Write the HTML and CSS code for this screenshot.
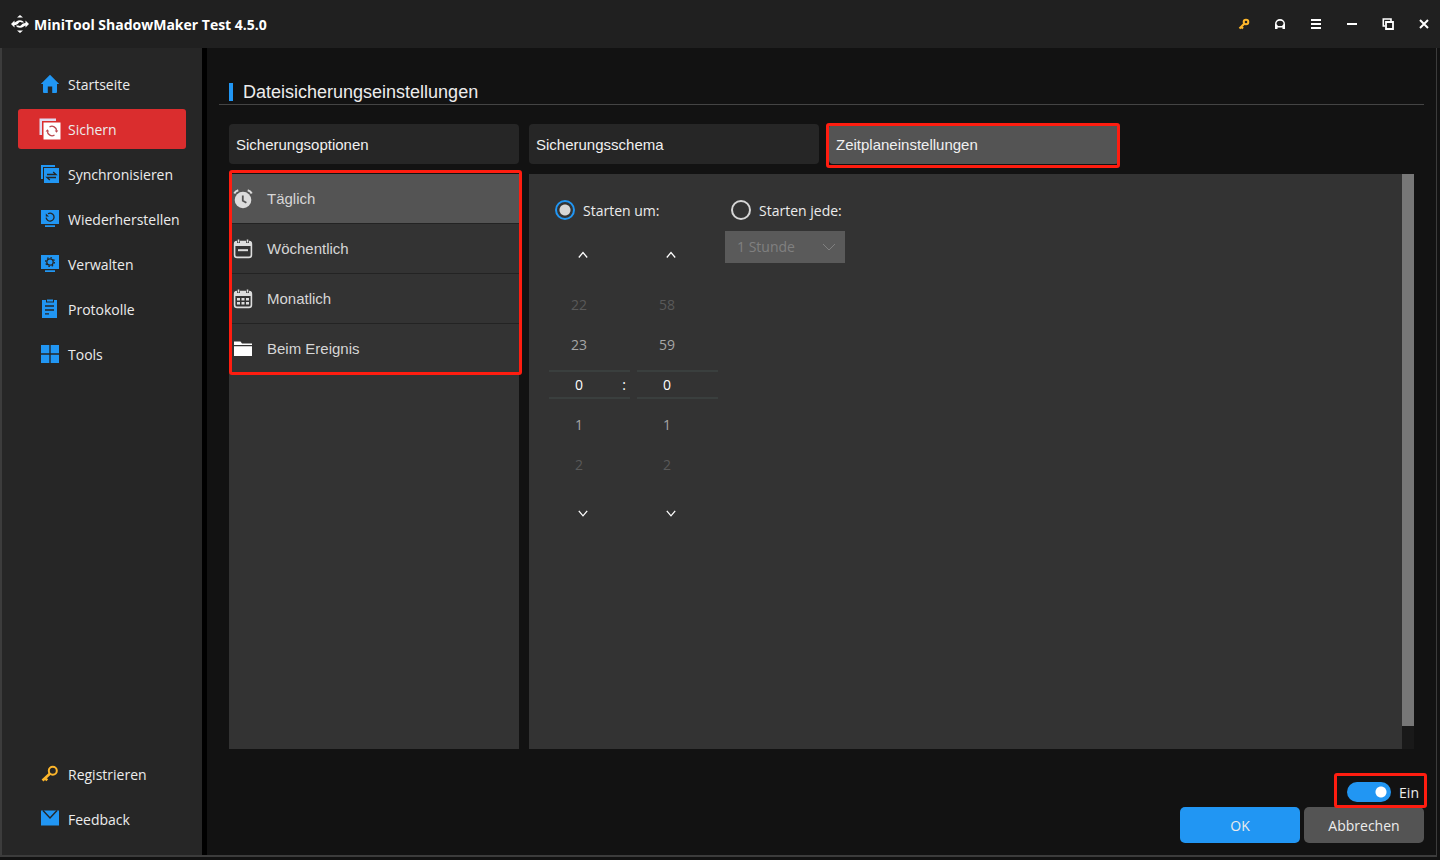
FILE: index.html
```html
<!DOCTYPE html>
<html lang="de">
<head>
<meta charset="utf-8">
<title>MiniTool ShadowMaker</title>
<link rel="stylesheet" href="styles.css">
</head>
<body>
<div class="window">
  <header class="titlebar">
    <svg class="logo" viewBox="0 0 18 18" aria-hidden="true">
      <path d="M6 2.600 9 0l3 2.600ZM6 15.400 9 18l3-2.600Z" fill="#fff"/>
      <path d="M0 9 3.500 5.500v2c1.500-.2 2.500-2.300 5.500-2.300 2 0 3.500 1 4 2.300H10.500C9 6.700 8.200 7.200 7.400 8.200c-.8 1-2 1.800-3.900 1.800v2.500ZM18 9l-3.500 3.500v-2c-1.500.2-2.500 2.300-5.500 2.300-2 0-3.500-1-4-2.300h2.500c1.500.8 2.300.3 3.100-.7.800-1 2-1.800 3.900-1.800V5.500Z" fill="#fff"/>
    </svg>
    <h1 class="app-title">MiniTool ShadowMaker Test 4.5.0</h1>
    <div class="window-controls">
      <button type="button" class="control" aria-label="Registrieren">
        <svg viewBox="0 0 12 12"><circle cx="8" cy="4" r="2.300" fill="none" stroke="#fdb62b" stroke-width="2"/><path d="M6.500 5.500 1.500 10.500M3 8.500l2 2" fill="none" stroke="#fdb62b" stroke-width="2.200"/></svg>
      </button>
      <button type="button" class="control" aria-label="Support">
        <svg viewBox="0 0 12 12"><path d="M1 11V6a5 5 0 0 1 10 0v5H8.500V9.500h-5V11Z" fill="#fff"/><path d="M2.500 6a3.500 3.300 0 0 1 7 0L8 8H4Z" fill="#202020"/></svg>
      </button>
      <button type="button" class="control" aria-label="Menü">
        <svg viewBox="0 0 12 12"><path d="M1 2h10M1 6h10M1 10h10" stroke="#fff" stroke-width="2"/></svg>
      </button>
      <button type="button" class="control" aria-label="Minimieren">
        <svg viewBox="0 0 12 12"><path d="M1 6h10" stroke="#fff" stroke-width="2"/></svg>
      </button>
      <button type="button" class="control" aria-label="Maximieren">
        <svg viewBox="0 0 12 12"><path d="M3 8H1.300V1H9v2" fill="none" stroke="#fff" stroke-width="1.600"/><path d="M4 4h7v7H4Z" fill="#202020" stroke="#fff" stroke-width="1.800"/></svg>
      </button>
      <button type="button" class="control" aria-label="Schließen">
        <svg viewBox="0 0 12 12"><path d="m2 2 8 8M10 2l-8 8" stroke="#fff" stroke-width="2"/></svg>
      </button>
    </div>
  </header>

  <div class="body">
    <nav class="sidebar">
      <a class="nav-item" href="#start">
        <svg class="nav-icon" viewBox="0 0 20 20"><path d="M10 .800 19.200 10H17v8q0 1-1 1h-3.800v-6.500H7.800V19H4q-1 0-1-1V10H.800Z" fill="#2196f3"/></svg>
        <span class="caption">Startseite</span></a>
      <a class="nav-item nav-item-active" href="#backup" aria-current="page">
        <svg class="nav-icon nav-icon-large" viewBox="0 0 22 22"><path d="M.500 17V.500H17V3H3V17Z" fill="#dfdcf0"/><path d="M4.500 4.500H21.500V21.500H4.500Z" fill="#fff"/><path d="M10.500 9a4.600 4.600 0 0 1 7.100 3.800M15.500 17a4.600 4.600 0 0 1-7.100-3.800" fill="none" stroke="#b9474e" stroke-width="1.300"/><path d="m15.700 12.500h3.600l-1.800 2.300ZM6.600 13.500h3.600l-1.800-2.300Z" fill="#b9474e"/></svg>
        <span class="caption">Sichern</span></a>
      <a class="nav-item" href="#sync">
        <svg class="nav-icon" viewBox="0 0 20 20"><path d="M1 15V1h14v2H3V15Z" fill="#2196f3"/><path d="M4 4h15v15H4Z" fill="#2196f3"/><path d="M7 10.500h9L13.200 8M16 13.500H7l2.800 2.500" fill="none" stroke="#262626" stroke-width="1.300"/></svg>
        <span class="caption">Synchronisieren</span></a>
      <a class="nav-item" href="#restore">
        <svg class="nav-icon" viewBox="0 0 20 20"><path d="M1 1h18v14H1ZM5 16.200h10v1.800H5Z" fill="#2196f3"/><path d="M8 4.700a4 4 0 1 1-1.900 4" fill="none" stroke="#262626" stroke-width="1.300"/><path d="M5.800 7.500V4.500L9 7.500Z" fill="#262626"/></svg>
        <span class="caption">Wiederherstellen</span></a>
      <a class="nav-item" href="#manage">
        <svg class="nav-icon" viewBox="0 0 20 20"><path d="M1 1h18v14H1ZM5 16.200h10v1.800H5Z" fill="#2196f3"/><circle cx="10" cy="8" r="3.200" fill="none" stroke="#262626" stroke-width="1.300"/><circle cx="10" cy="8" r="4.400" fill="none" stroke="#262626" stroke-width="1.300" stroke-dasharray="1.500 1.950"/></svg>
        <span class="caption">Verwalten</span></a>
      <a class="nav-item" href="#logs">
        <svg class="nav-icon" viewBox="0 0 20 20"><path d="M2 1h4v2.500h8V1h3v18H2Z" fill="#2196f3"/><path d="M7 .5h6v2H7Z" fill="#2196f3"/><path d="M5 7h9M5 11h9M5 14.800h4" stroke="#262626" stroke-width="1.300"/></svg>
        <span class="caption">Protokolle</span></a>
      <a class="nav-item" href="#tools">
        <svg class="nav-icon" viewBox="0 0 20 20"><path d="M1 1h8.300v8.300H1ZM10.700 1H19v8.300h-8.300ZM1 10.700h8.300V19H1ZM10.700 10.700H19V19h-8.300Z" fill="#2196f3"/></svg>
        <span class="caption">Tools</span></a>
      <div class="nav-spacer"></div>
      <a class="nav-item" href="#register">
        <svg class="nav-icon" viewBox="0 0 20 20"><circle cx="12.800" cy="6.800" r="4" fill="none" stroke="#fdb62b" stroke-width="2"/><path d="m9.800 9.800-7.300 6.700M4.500 14l2.800 2.300" fill="none" stroke="#fdb62b" stroke-width="2.600"/></svg>
        <span class="caption">Registrieren</span></a>
      <a class="nav-item" href="#feedback">
        <svg class="nav-icon" viewBox="0 0 20 20"><path d="M1 1.500h18V16.500H1Z" fill="#2196f3"/><path d="m3 1.500 7 7.500 7-7.500" fill="none" stroke="#262626" stroke-width="1.400"/></svg>
        <span class="caption">Feedback</span></a>
    </nav>

    <main class="main">
      <h2 class="page-title">Dateisicherungseinstellungen</h2>

      <div class="content">
        <div class="tabs">
          <button type="button" class="tab">Sicherungsoptionen</button>
          <button type="button" class="tab">Sicherungsschema</button>
          <button type="button" class="tab tab-active">Zeitplaneinstellungen<span class="highlight highlight-tab"></span></button>
        </div>

        <div class="panels">
          <div class="modes">
            <button type="button" class="mode mode-active">
              <svg class="mode-icon" viewBox="0 0 20 20"><circle cx="10" cy="11" r="8.300" fill="#dcdcdc"/><path d="M1.300 4.500q1-2.400 4-3.300M18.700 4.500q-1-2.400-4-3.300" fill="none" stroke="#dcdcdc" stroke-width="2"/><path d="M9.800 6.500v5.300l3.600 2" fill="none" stroke="#545454" stroke-width="1.800"/></svg>
              Täglich</button>
            <button type="button" class="mode">
              <svg class="mode-icon" viewBox="0 0 20 20"><rect x="1.600" y="2.600" width="16.800" height="15.800" rx="2.500" fill="none" stroke="#dcdcdc" stroke-width="1.600"/><path d="M2 2.500h16V7H2Z" fill="#dcdcdc"/><path d="M5.500 0v4M14.500 0v4" stroke="#333" stroke-width="3"/><path d="M5.500 .5v3M14.500 .5v3" stroke="#dcdcdc" stroke-width="1.600"/><path d="M5 11.200h10" stroke="#dcdcdc" stroke-width="2"/></svg>
              Wöchentlich</button>
            <button type="button" class="mode">
              <svg class="mode-icon" viewBox="0 0 20 20"><rect x="1.600" y="2.600" width="16.800" height="15.800" rx="2.500" fill="none" stroke="#dcdcdc" stroke-width="1.600"/><path d="M2 2.500h16V7H2Z" fill="#dcdcdc"/><path d="M5.500 0v4M14.500 0v4" stroke="#333" stroke-width="3"/><path d="M5.500 .5v3M14.500 .5v3" stroke="#dcdcdc" stroke-width="1.600"/><path d="M4 10.300h12M4 14.200h12" stroke="#dcdcdc" stroke-width="2.400" stroke-dasharray="3 1.500"/></svg>
              Monatlich</button>
            <button type="button" class="mode">
              <svg class="mode-icon" viewBox="0 0 20 20"><path d="M1 2.500h6.500l1.500 2H19V6H1ZM1 7.200h18V17H1Z" fill="#fff"/></svg>
              Beim Ereignis</button>
            <span class="highlight highlight-modes"></span>
          </div>

          <div class="schedule">
            <section class="start-at">
              <label class="radio"><input type="radio" name="start" checked><span class="caption">Starten um:</span></label>
              <div class="wheels">
                <div class="wheel">
                  <button type="button" class="step" aria-label="Stunde zurück"><svg viewBox="0 0 12 12"><path d="m1.800 8.500 4.200-5 4.200 5" fill="none" stroke="#fff" stroke-width="1.300"/></svg></button>
                  <ul class="values">
                    <li class="far">22</li><li class="near">23</li><li class="current">0<span class="colon">:</span></li><li class="near">1</li><li class="far">2</li>
                  </ul>
                  <button type="button" class="step" aria-label="Stunde vor"><svg viewBox="0 0 12 12"><path d="m1.800 3.800 4.200 5 4.200-5" fill="none" stroke="#fff" stroke-width="1.300"/></svg></button>
                </div>
                <div class="wheel">
                  <button type="button" class="step" aria-label="Minute zurück"><svg viewBox="0 0 12 12"><path d="m1.800 8.500 4.200-5 4.200 5" fill="none" stroke="#fff" stroke-width="1.300"/></svg></button>
                  <ul class="values">
                    <li class="far">58</li><li class="near">59</li><li class="current">0</li><li class="near">1</li><li class="far">2</li>
                  </ul>
                  <button type="button" class="step" aria-label="Minute vor"><svg viewBox="0 0 12 12"><path d="m1.800 3.800 4.200 5 4.200-5" fill="none" stroke="#fff" stroke-width="1.300"/></svg></button>
                </div>
              </div>
            </section>
            <section class="start-every">
              <label class="radio"><input type="radio" name="start"><span class="caption">Starten jede:</span></label>
              <div class="interval">
                <select class="interval-select" aria-label="Intervall" disabled><option>1 Stunde</option></select>
                <svg class="interval-arrow" viewBox="0 0 14 8"><path d="m1 1 6 6 6-6" fill="none" stroke="#808080"/></svg>
              </div>
            </section>
          </div>
          <div class="scrollbar"><div class="scroll-thumb"></div></div>
        </div>
      </div>

      <footer class="footer">
        <label class="toggle"><input type="checkbox" role="switch" checked><span class="caption">Ein</span><span class="highlight highlight-toggle"></span></label>
        <div class="actions">
          <button type="button" class="button button-primary">OK</button>
          <button type="button" class="button">Abbrechen</button>
        </div>
      </footer>
    </main>
  </div>
</div>
</body>
</html>
```
FILE: styles.css
```css
* { box-sizing: border-box; }

body {
  margin: 0;
  background: #121212;
  color: #ececec;
  font: 14px/20px "Open Sans", "Noto Sans", sans-serif;
}

button, select, input { font: inherit; color: inherit; margin: 0; }
button { border: 0; padding: 0; background: none; }
svg { display: block; flex: none; }

.window {
  display: flex;
  flex-direction: column;
  height: 100vh;
  padding-bottom: 3px;
}

.caption { padding-top: 2px; }

/* Title bar */
.titlebar {
  display: flex;
  align-items: center;
  gap: 5px;
  height: 48px;
  flex: none;
  padding: 0 4px 0 11px;
  background: #202020;
}
.logo { width: 18px; height: 18px; }
.app-title {
  margin: 0;
  padding-top: 2px;
  color: #fff;
  font-size: 14px;
  font-weight: 700;
}
.window-controls { display: flex; gap: 12px; margin-left: auto; }
.control {
  display: grid;
  place-items: center;
  width: 24px;
  height: 24px;
}
.control svg { width: 12px; height: 12px; }

/* Frame */
.body {
  display: flex;
  flex: 1;
  min-height: 0;
  margin-right: 3px;
  border: solid #3c3c3c;
  border-width: 0 1px 2px 2px;
}

/* Sidebar */
.sidebar {
  display: flex;
  flex-direction: column;
  gap: 5px;
  flex: none;
  width: 205px;
  padding: 16px;
  border-right: 5px solid #000;
  background: #262626;
}
.nav-item {
  display: flex;
  align-items: center;
  gap: 8px;
  height: 40px;
  padding-left: 22px;
  border-radius: 3px;
  color: #ececec;
  text-decoration: none;
}
.nav-item-active { background: #da2d2e; }
.nav-icon { width: 20px; height: 20px; }
.nav-icon-large { width: 22px; height: 22px; margin: 0 -1px; }
.nav-spacer { flex: 1; }

/* Main area */
.main {
  display: flex;
  flex-direction: column;
  flex: 1;
  min-width: 0;
  padding: 32px 12px 12px;
}
.page-title {
  display: flex;
  align-items: center;
  gap: 10px;
  height: 25px;
  margin: 0;
  padding: 0 10px;
  border-bottom: 1px solid #444;
  font: 18px/24px "Liberation Sans", Arial, sans-serif;
}
.page-title::before {
  width: 4px;
  height: 18px;
  background: #2196f3;
  content: "";
}
.content {
  display: flex;
  flex-direction: column;
  gap: 10px;
  flex: 1;
  min-height: 0;
  padding: 19px 10px 0;
}

.tabs { display: flex; gap: 10px; font: 15px/20px "Liberation Sans", Arial, sans-serif; }
.tab {
  position: relative;
  width: 290px;
  height: 40px;
  padding: 2px 7px 0;
  border-radius: 4px;
  background: #262626;
  color: #f0f0f0;
  text-align: left;
}
.tab-active { background: #545454; }

.highlight {
  position: absolute;
  border: 3px solid #ff1d10;
  border-radius: 3px;
  pointer-events: none;
}
.highlight-tab { inset: -1px -1px -4px -3px; }
.highlight-modes { inset: -4px -3px auto 0; height: 205px; }
.highlight-toggle { inset: -9px -3px -6px -13px; }

.panels { display: flex; flex: 1; min-height: 0; }

/* Schedule modes */
.modes {
  position: relative;
  flex: none;
  width: 290px;
  margin-right: 10px;
  background: #333;
  font: 15px/20px "Liberation Sans", Arial, sans-serif;
}
.mode {
  display: flex;
  align-items: center;
  gap: 14px;
  width: 100%;
  height: 50px;
  padding-left: 4px;
  border-bottom: 1px solid #232323;
  color: #d6d6d6;
}
.mode:last-of-type { border-bottom-color: transparent; }
.mode-active { background: #545454; }
.mode-icon { width: 20px; height: 20px; }

/* Time settings */
.schedule {
  display: flex;
  gap: 7px;
  flex: 1;
  padding: 26px 20px;
  background: #333;
}
.radio {
  display: flex;
  align-items: center;
  gap: 8px;
  height: 20px;
  padding-left: 6px;
}
.radio input {
  appearance: none;
  width: 20px;
  height: 20px;
  border: 2px solid #d6d6d6;
  border-radius: 50%;
}
.radio input:checked {
  border-color: #2196f3;
  background: radial-gradient(circle, #d6d6d6 5px, transparent 6px);
}
.wheels { display: flex; gap: 7px; padding-top: 25px; }
.wheel { width: 81px; }
.step {
  display: grid;
  place-items: center;
  width: 68px;
  height: 20px;
}
.step svg { width: 12px; height: 12px; }
.values {
  margin: 20px 0 18px;
  padding: 0;
  list-style: none;
  line-height: 40px;
}
.values li { padding-right: 21px; text-align: center; }
.far { color: #595959; }
.near { color: #a6a6a6; }
.values .current {
  position: relative;
  margin: 5px 0 6px;
  border: solid #3a3f3e;
  border-width: 2px 0;
  color: #fff;
  line-height: 25px;
}
.colon { position: absolute; right: 4px; }

.interval { position: relative; width: 120px; margin-top: 11px; }
.interval-select {
  appearance: none;
  width: 100%;
  height: 32px;
  padding: 0 12px;
  border: 0;
  border-radius: 0;
  background: #5a5a5a;
  color: #808080;
  opacity: 1;
}
.interval-arrow {
  position: absolute;
  top: 12px;
  right: 9px;
  width: 14px;
  height: 8px;
}

.scrollbar { flex: none; width: 12px; background: #191919; }
.scroll-thumb { height: 96%; background: #777; }

/* Footer */
.footer {
  display: flex;
  flex-direction: column;
  align-items: flex-end;
  gap: 5px;
  padding-top: 33px;
}
.toggle {
  position: relative;
  display: flex;
  align-items: center;
  gap: 8px;
  height: 20px;
  padding-right: 5px;
}
.toggle input {
  appearance: none;
  width: 44px;
  height: 20px;
  border-radius: 10px;
  background: radial-gradient(circle at 34px 10px, #fff 5px, #2196f3 6px);
}
.actions { display: flex; gap: 4px; }
.button {
  width: 120px;
  height: 36px;
  padding-top: 2px;
  border-radius: 5px;
  background: #545454;
}
.button-primary { background: #2196f3; }
```
